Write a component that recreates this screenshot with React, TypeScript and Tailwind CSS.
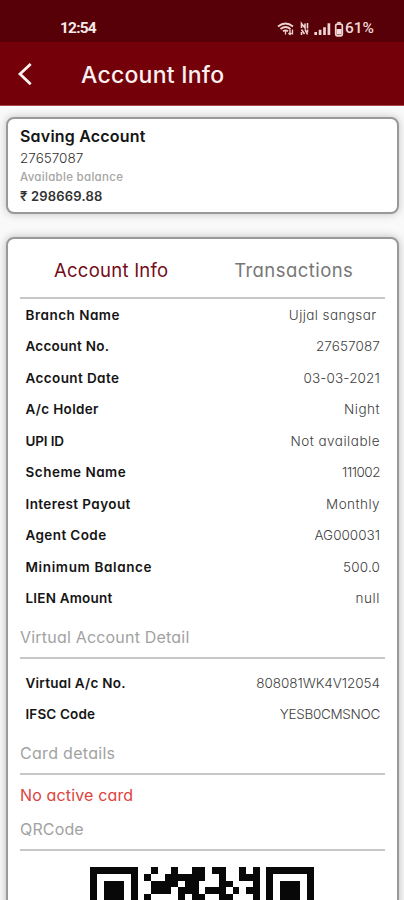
import type { ReactNode } from "react";

type Row = { label: string; value: string; labelTrack: string; valueTrack: string };

const accountRows: Row[] = [
  { label: "Branch Name", value: "Ujjal sangsar", labelTrack: "tracking-[0.5px]", valueTrack: "tracking-[0.4px] pr-[3.5px]" },
  { label: "Account No.", value: "27657087", labelTrack: "tracking-[0.25px]", valueTrack: "tracking-[0.1px]" },
  { label: "Account Date", value: "03-03-2021", labelTrack: "tracking-[0.4px]", valueTrack: "tracking-[0.15px]" },
  { label: "A/c Holder", value: "Night", labelTrack: "tracking-[0.33px]", valueTrack: "tracking-[0.5px]" },
  { label: "UPI ID", value: "Not available", labelTrack: "tracking-[-0.15px]", valueTrack: "tracking-[0.5px]" },
  { label: "Scheme Name", value: "111002", labelTrack: "tracking-[0.5px]", valueTrack: "tracking-[-0.5px]" },
  { label: "Interest Payout", value: "Monthly", labelTrack: "tracking-[0.4px]", valueTrack: "tracking-[0.45px]" },
  { label: "Agent Code", value: "AG000031", labelTrack: "tracking-[0.4px]", valueTrack: "tracking-[0px]" },
  { label: "Minimum Balance", value: "500.0", labelTrack: "tracking-[0.64px]", valueTrack: "tracking-[0.15px]" },
  { label: "LIEN Amount", value: "null", labelTrack: "tracking-[0.2px]", valueTrack: "tracking-[0.6px]" },
];

const virtualRows: Row[] = [
  { label: "Virtual A/c No.", value: "808081WK4V12054", labelTrack: "tracking-[0.25px]", valueTrack: "tracking-[-0.05px]" },
  { label: "IFSC Code", value: "YESB0CMSNOC", labelTrack: "tracking-[0.13px]", valueTrack: "tracking-[-0.3px]" },
];

const qrRows = [
  "#######..#..#..##.##..#.#.#######",
  "#.....#.#..######..#..###.#.....#",
  "#.###.#..####.##...##...#.#.###.#",
  "#.###.#..###.###.###.#.##.#.###.#",
  "#.###.#.#....#.##..##...#.#.###.#",
];

function DetailRows({ rows }: { rows: Row[] }) {
  return (
    <dl className="flex flex-col pr-[5px] pl-[5.5px]">
      {rows.map((row) => (
        <div key={row.label} className="flex h-[31.5px] items-center justify-between pt-px leading-none">
          <dt className={`text-[13.5px] font-semibold whitespace-nowrap text-[#151515] ${row.labelTrack}`}>{row.label}</dt>
          <dd className={`text-[13.5px] font-light whitespace-nowrap text-[#404040] ${row.valueTrack}`}>{row.value}</dd>
        </div>
      ))}
    </dl>
  );
}

function SectionTitle({ children, className }: { children: ReactNode; className: string }) {
  return <h2 className={`flex shrink-0 items-center border-b-2 border-[#c8c8c8] text-[16px] leading-none text-[#a2a2a2] ${className}`}>{children}</h2>;
}

function StatusIcons() {
  return (
    <svg className="h-[18px] w-[68px]" viewBox="0 0 68 18" fill="none" stroke="#eed3d3">
      <path d="M1 6.4Q8.500.6 16 6.4M3.500 8.900Q8.500 5 13.500 8.900M6 11.300Q8.500 9.500 11 11.300" strokeWidth="1.9" />
      <path d="M8.500 11v3.500M13 9.500v5m-1.500-1.500 1.500 1.500 1.500-1.500M15.500 14.500V9.500" strokeWidth="1.3" />
      <path d="M24.500 8V3.500l3.500 4.500V3.500M30.500 3v5.500M24.500 9.500l3 4.500M28 9.500l2.500 5M24.500 12v3M30.500 9.500v3" strokeWidth="1.6" />
      <path d="M38.700 15v-3M43.100 15V9.800M47.500 15V7.300M51.900 15V3.300" strokeWidth="2.700" />
      <rect x="58.700" y="4.200" width="6.600" height="11.600" rx="1.700" strokeWidth="1.700" />
      <path d="M60.200 2.700h3.600" strokeWidth="1.700" />
      <path d="M59.500 9h5v5.500h-5z" fill="#f4dede" stroke="none" />
    </svg>
  );
}

export default function App() {
  return (
    <div className="flex h-[900px] w-[404px] flex-col overflow-hidden bg-[#f9f9f9] font-[Inter,sans-serif] [font-feature-settings:'cv11']">
      <div className="flex h-[42px] shrink-0 items-center justify-between bg-[#570007] pt-[15px] pr-[30px] pl-[60px] text-[#f7e9e9]">
        <span className="font-[Roboto,sans-serif] text-[15.5px] leading-none font-bold tracking-[-0.8px]">12:54</span>
        <div className="flex items-center">
          <StatusIcons />
          <span className="font-[Roboto,sans-serif] text-[15.5px] leading-none font-medium text-[#eed8d8]">61%</span>
        </div>
      </div>
      <header className="flex h-[64px] shrink-0 items-center border-b border-[#a8484e] bg-[#740009] pl-[16px] text-[#faf0f0]">
        <svg className="h-[24px] w-[18px]" viewBox="0 0 18 24" fill="none" stroke="currentColor" strokeWidth="2.8">
          <path d="M14.700 2 4 12l10.700 10.200" />
        </svg>
        <h1 className="pt-[3px] pl-[47px] text-[23px] leading-none font-medium tracking-[0.25px]">Account Info</h1>
      </header>

      <main className="flex flex-col gap-[23px] pt-[11px] pr-[5px] pl-[6px]">
        <section className="flex h-[97px] shrink-0 flex-col rounded-[8px] border-2 border-[#999] bg-white pt-[8.5px] pl-[12px] leading-none shadow-[0_0_8px_rgba(0,0,0,0.22)]">
          <h2 className="text-[16px] font-semibold tracking-[0.2px] text-[#151515]">Saving Account</h2>
          <p className="mt-[8.5px] text-[13.5px] font-light text-[#303030]">27657087</p>
          <p className="mt-[6px] text-[11.5px] font-medium tracking-[0.3px] text-[#a5a5a5]">Available balance</p>
          <p className="mt-[6.5px] text-[13px] font-semibold tracking-[0.2px] text-[#333]">₹ 298669.88</p>
        </section>

        <section className="flex h-[680px] shrink-0 flex-col rounded-[8px] border-2 border-[#999] bg-white px-[12px] shadow-[0_0_8px_rgba(0,0,0,0.25)]">
          <nav className="grid h-[60px] shrink-0 grid-cols-2 items-center border-b-2 border-[#c8c8c8] pt-[5px] text-center text-[18.5px] leading-none">
            <span className="tracking-[0.25px] text-[#740b18]">Account Info</span>
            <span className="tracking-[0.45px] text-[#777]">Transactions</span>
          </nav>
          <DetailRows rows={accountRows} />
          <SectionTitle className="h-[45px] pt-[2px] tracking-[0.2px]">Virtual Account Detail</SectionTitle>
          <div className="pt-[8px]">
            <DetailRows rows={virtualRows} />
          </div>
          <SectionTitle className="h-[45px] pt-[2px] tracking-[0.3px]">Card details</SectionTitle>
          <p className="flex h-[40px] shrink-0 items-center pb-px text-[16px] leading-none tracking-[0.15px] text-[#dc4440]">No active card</p>
          <SectionTitle className="h-[36px] pb-[7px] tracking-[0.15px]">QRCode</SectionTitle>
          <svg className="mt-[16px] ml-[70px] h-[34px] w-[224px] shrink-0" viewBox="0 0 33 5" preserveAspectRatio="none" shapeRendering="crispEdges">
            {qrRows.map((row, y) => row.split("").map((cell, x) => (cell === "#" ? <rect key={`${x}-${y}`} x={x} y={y} width="1" height="1" fill="#080808" /> : null)))}
          </svg>
        </section>
      </main>
    </div>
  );
}
